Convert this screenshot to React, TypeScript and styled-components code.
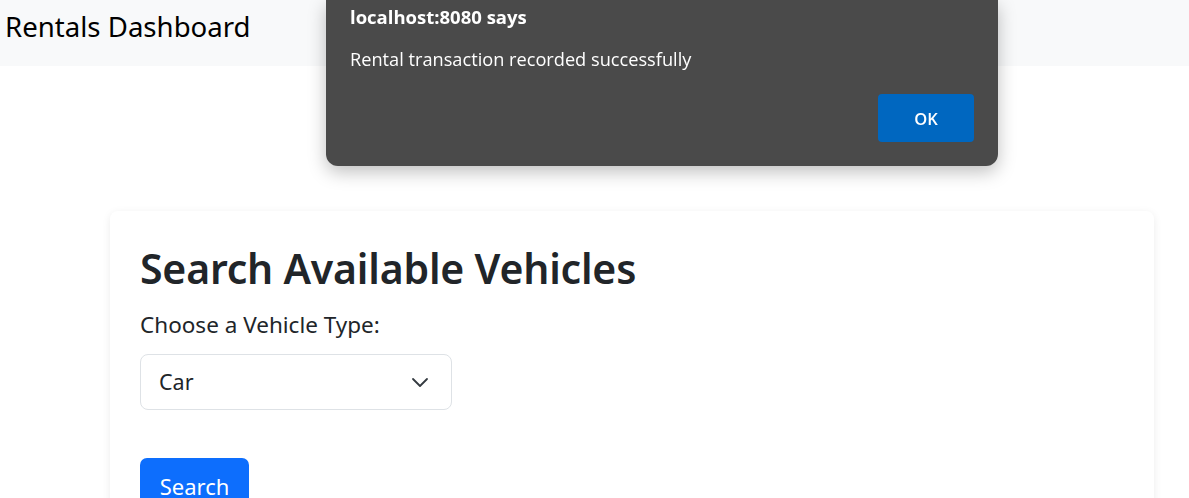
import React from "react";
import styled, { createGlobalStyle } from "styled-components";

const Global = createGlobalStyle`
  html, body { margin: 0; padding: 0; background: #ffffff; }
  body { font-family: "Noto Sans", "Open Sans", sans-serif; color: #212529; }
  * { box-sizing: border-box; }
`;

const Page = styled.div`
  min-height: 498px;
  display: flex;
  flex-direction: column;
`;

const Header = styled.header`
  height: 66px;
  background: #f8f9fa;
  display: flex;
  align-items: center;
  padding-left: 5px;
`;

const Brand = styled.span`
  font-size: 27.6px;
  color: #000;
  font-weight: 400;
  line-height: 1;
  margin-top: -13px;
`;

const Main = styled.main`
  padding: 145px 35px 0 110px;
`;

const Card = styled.section`
  background: #fff;
  border-radius: 8px;
  box-shadow: 0 2px 8px rgba(0, 0, 0, 0.08);
  padding: 33px 30px 40px;
  display: flex;
  flex-direction: column;
  align-items: flex-start;
`;

const Title = styled.h1`
  margin: 0;
  font-size: 41px;
  font-weight: 600;
  line-height: 1.2;
  letter-spacing: -0.2px;
  color: #212529;
`;

const Label = styled.label`
  margin-top: 15px;
  font-size: 22.5px;
  line-height: 1.5;
  color: #212529;
`;

const SelectBox = styled.div`
  margin-top: 12px;
  width: 312px;
  height: 56px;
  border: 1px solid #dee2e6;
  border-radius: 8px;
  display: flex;
  align-items: center;
  justify-content: space-between;
  padding: 0 22px 0 18px;
  font-size: 21.5px;
  color: #212529;
`;

const Button = styled.button`
  margin-top: 48px;
  width: 109px;
  height: 55px;
  background: #0d6efd;
  color: #fff;
  border: none;
  border-radius: 7px;
  font-family: inherit;
  font-size: 22px;
  line-height: 33px;
  display: flex;
  justify-content: center;
  align-items: flex-start;
  padding: 12px 0 0;
`;

const Dialog = styled.div`
  position: fixed;
  top: 0;
  left: 326px;
  width: 672px;
  height: 166px;
  background: #4a4a4a;
  border-radius: 0 0 12px 12px;
  box-shadow: 0 6px 18px rgba(0, 0, 0, 0.25);
  padding: 0 24px 24px;
  display: flex;
  flex-direction: column;
  color: #fff;
  font-family: "Open Sans", "Noto Sans", sans-serif;
`;

const DialogTitle = styled.div`
  font-weight: 700;
  font-size: 18.5px;
  margin-top: 5px;
  line-height: 24px;
`;

const DialogMessage = styled.div`
  font-size: 18.2px;
  margin-top: 18px;
  line-height: 24px;
`;

const DialogActions = styled.div`
  margin-top: auto;
  display: flex;
  justify-content: flex-end;
`;

const OkButton = styled.button`
  width: 96px;
  height: 48px;
  background: #0067c0;
  color: #fff;
  border: none;
  border-radius: 4px;
  font-family: inherit;
  font-weight: 600;
  font-size: 16.5px;
`;

export default function App() {
  return (
    <>
      <Global />
      <Page>
        <Header>
          <Brand>Rentals Dashboard</Brand>
        </Header>
        <Main>
          <Card>
            <Title>Search Available Vehicles</Title>
            <Label>Choose a Vehicle Type:</Label>
            <SelectBox>
              <span>Car</span>
              <svg width="18" height="12" viewBox="0 0 18 12" fill="none">
                <path d="M2 3l7 7 7-7" stroke="#343a40" strokeWidth="1.8" strokeLinecap="round" strokeLinejoin="round" />
              </svg>
            </SelectBox>
            <Button>Search</Button>
          </Card>
        </Main>
      </Page>
      <Dialog>
        <DialogTitle>localhost:8080 says</DialogTitle>
        <DialogMessage>Rental transaction recorded successfully</DialogMessage>
        <DialogActions>
          <OkButton>OK</OkButton>
        </DialogActions>
      </Dialog>
    </>
  );
}
